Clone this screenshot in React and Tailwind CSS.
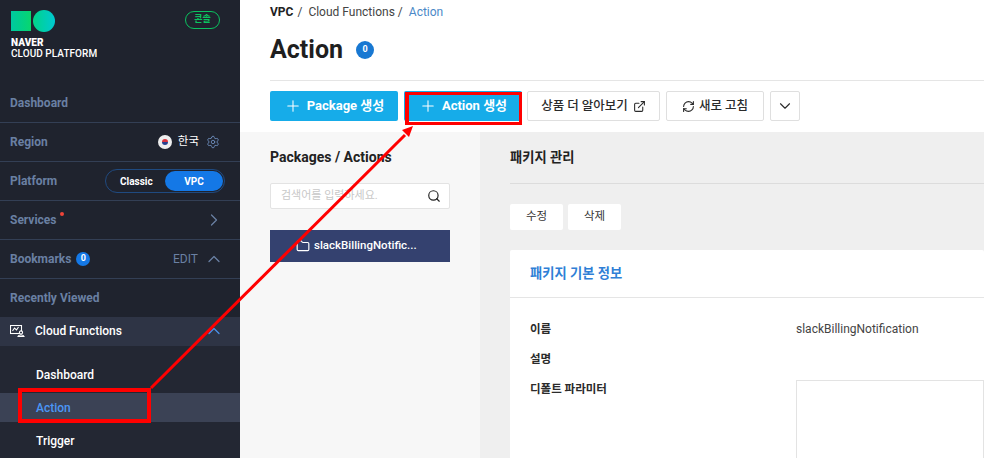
import React from "react";
import { Plus, ExternalLink, RefreshCw, ChevronDown, ChevronUp, ChevronRight, Search, Folder, Settings } from "lucide-react";

const font = { fontFamily: '"Roboto","Noto Sans CJK KR",sans-serif' };

function Row({ children }) {
  return <div className="h-[39px] shrink-0 border-b border-[#333f55] pl-[10px] pr-[20px] flex items-center justify-between text-[#6a80a3] text-[12px] font-bold">{children}</div>;
}

function Sidebar() {
  return (
    <aside className="w-[240px] h-full shrink-0 bg-[#1f232e] flex flex-col overflow-hidden">
      <div className="h-[84px] shrink-0 pl-[11px] pr-[20px] pt-[10px] flex justify-between items-start">
        <div>
          <div className="flex items-center gap-[2px]">
            <div className="w-[20px] h-[20px] bg-gradient-to-r from-[#00c9a0] to-[#0ad66d]" />
            <div className="w-[22px] h-[22px] rounded-full bg-gradient-to-r from-[#06d486] to-[#00c8d0]" />
          </div>
          <div className="mt-[5px] text-white text-[10px] leading-[11px] font-black tracking-[0.05px]">NAVER</div>
          <div className="text-white text-[10px] leading-[11px] font-medium tracking-[0.05px]">CLOUD PLATFORM</div>
        </div>
        <div className="mt-px w-[35px] h-[18px] rounded-full border border-[#0bc25f] text-[#0bc25f] text-[9px] font-bold flex items-center justify-center">콘솔</div>
      </div>
      <Row><span>Dashboard</span></Row>
      <Row>
        <span>Region</span>
        <span className="flex items-center text-white font-normal text-[11.5px]">
          <svg width="14" height="14" viewBox="0 0 14 14" className="mr-[6px]"><circle cx="7" cy="7" r="7" fill="#eee" /><path d="M4 7a3 3 0 0 1 6 0z" fill="#d8333e" /><path d="M4 7a3 3 0 0 0 6 0z" fill="#26408f" /></svg>
          한국
          <Settings size={14} className="ml-[7px] text-[#6a8ab8]" strokeWidth={1.6} />
        </span>
      </Row>
      <Row>
        <span>Platform</span>
        <span className="-mr-[5px] w-[120px] h-[24px] rounded-full border border-[#1f4a80] flex items-center justify-between text-white text-[10px] font-bold pr-px">
          <span className="pl-[14px]">Classic</span>
          <span className="w-[58px] h-[20px] rounded-full bg-[#1478e6] flex items-center justify-center">VPC</span>
        </span>
      </Row>
      <Row>
        <span className="relative">Services<span className="absolute -right-[7px] top-[1px] w-[4px] h-[4px] rounded-full bg-[#f04438]" /></span>
        <ChevronRight size={20} className="text-[#6a80a3] -mr-[4px]" strokeWidth={1.5} />
      </Row>
      <Row>
        <span className="flex items-center">Bookmarks<span className="ml-[5px] w-[14px] h-[14px] rounded-full bg-[#1478e6] text-white text-[9px] flex items-center justify-center">0</span></span>
        <span className="flex items-center font-normal text-[12px]">EDIT<ChevronUp size={20} className="ml-[6px] -mr-[4px]" strokeWidth={1.5} /></span>
      </Row>
      <div className="h-[38px] shrink-0 pl-[10px] flex items-center text-[#6a80a3] text-[12px] font-bold">Recently Viewed</div>
      <div className="h-[29px] shrink-0 bg-[#2e3445] pl-[10px] pr-[20px] pb-[2px] flex items-center justify-between text-white text-[12px] font-medium">
        <span className="flex items-center">
          <svg width="15" height="12" viewBox="0 0 15 12" fill="none" stroke="#fff" strokeWidth="1.1" className="mr-[10px]"><rect x="0.5" y="0.5" width="11" height="8" /><path d="M2.5 6l2-3 2 2 2-3" /><circle cx="11" cy="7.5" r="1.6" fill="#2e3445" /><path d="M8 11.5c.5-2 5.5-2 6 0z" fill="#2e3445" /></svg>
          Cloud Functions
        </span>
        <ChevronUp size={20} className="text-[#4a90e8] -mr-[4px]" strokeWidth={1.5} />
      </div>
      <div className="flex-1 bg-[#232733] pt-[13px] text-[12px] font-medium text-white">
        <div className="h-[34px] pl-[36px] pb-[2px] flex items-center">Dashboard</div>
        <div className="h-[29px] pl-[36px] flex items-center bg-[#3b4255] text-[#4b96f5]">Action</div>
        <div className="h-[38px] pl-[36px] flex items-center">Trigger</div>
      </div>
    </aside>
  );
}

function Toolbar() {
  const blue = "h-[30px] rounded-[2px] bg-[#16ace9] text-white text-[13px] font-bold flex items-center justify-center";
  const ghost = "h-[30px] rounded-[2px] border border-[#dfdfdf] bg-white text-[#2b2b2b] text-[12.5px] font-medium flex items-center justify-center";
  return (
    <div className="flex items-center h-[30px] mt-[10px]">
      <button className={`${blue} w-[128px]`}><Plus size={18} className="mr-[5px]" strokeWidth={1.4} />Package 생성</button>
      <button className={`${blue} w-[118px] ml-[6px]`}><Plus size={18} className="mr-[5px]" strokeWidth={1.4} />Action 생성</button>
      <button className={`${ghost} w-[133px] ml-[5px]`}>상품 더 알아보기<ExternalLink size={13} className="ml-[5px]" /></button>
      <button className={`${ghost} w-[98px] ml-[6px]`}><RefreshCw size={13} className="mr-[4px]" />새로 고침</button>
      <button className={`${ghost} w-[30px] ml-[6px]`}><ChevronDown size={18} strokeWidth={1.5} /></button>
    </div>
  );
}

function InfoRow({ label, value, className }) {
  return (
    <div className={`flex text-[11.5px] ${className}`}>
      <div className="w-[286px] pl-[20px] font-bold text-[#2b2b2b]">{label}</div>
      <div className="text-[#444] text-[12px]">{value}</div>
    </div>
  );
}

export default function App() {
  return (
    <div style={font} className="relative w-[984px] h-[458px] overflow-hidden flex bg-white">
      <Sidebar />
      <main className="flex-1 flex flex-col min-w-0">
        <header className="h-[132px] shrink-0 pl-[30px]">
          <div className="h-[24px] flex items-center text-[12px] text-[#444]">
            <span className="font-bold text-[#222]">VPC</span><span className="ml-[4px]">/</span>
            <span className="ml-[6px]">Cloud Functions</span><span className="ml-[3px]">/</span>
            <span className="ml-[6px] text-[#4a88c7]">Action</span>
          </div>
          <div className="h-[57px] border-b border-[#e5e5e5] flex items-start pt-[10px]">
            <span className="text-[25px] leading-[32px] font-bold text-[#1f1f1f]">Action</span>
            <span className="ml-[13px] mt-[7px] w-[18px] h-[18px] rounded-full bg-[#1878d2] text-white text-[9px] font-bold flex items-center justify-center">0</span>
          </div>
          <Toolbar />
        </header>
        <div className="flex-1 flex min-h-0">
          <section className="w-[240px] shrink-0 bg-[#f7f7f7] pl-[30px] pr-[30px]">
            <div className="h-[51px] flex items-center text-[14px] font-bold text-[#222]">Packages / Actions</div>
            <div className="h-[26px] border border-[#e3e3e3] bg-white rounded-[2px] flex items-center justify-between pl-[10px] pr-[8px] text-[11px] text-[#c8c8c8]">
              <span>검색어를 입력하세요.</span>
              <Search size={14} className="text-[#222]" />
            </div>
            <div className="mt-[21px] h-[32px] bg-[#34416f] pl-[26px] text-white text-[11.5px] font-medium flex items-center">
              <Folder size={14} className="mr-[4px]" />slackBillingNotific...
            </div>
          </section>
          <section className="flex-1 min-w-0 bg-[#efefef] pl-[30px]">
            <div className="h-[52px] border-b border-[#dcdcdc] flex items-center text-[13.3px] font-bold text-[#222]">패키지 관리</div>
            <div className="mt-[20px] flex gap-[5px]">
              <button className="w-[53px] h-[26px] bg-white rounded-[2px] text-[11.5px] text-[#333]">수정</button>
              <button className="w-[53px] h-[26px] bg-white rounded-[2px] text-[11.5px] text-[#333]">삭제</button>
            </div>
            <div className="mt-[20px] h-[300px] bg-white rounded-t-[2px]">
              <div className="h-[48px] border-b border-[#e5e5e5] pl-[20px] flex items-center text-[13.3px] font-bold text-[#2f7fd6]">패키지 기본 정보</div>
              <InfoRow className="mt-[23px] leading-[16px]" label="이름" value="slackBillingNotification" />
              <InfoRow className="mt-[14px] leading-[16px]" label="설명" value="" />
              <div className="flex mt-[14px] text-[11.5px] leading-[16px]">
                <div className="w-[286px] pl-[20px] font-bold text-[#2b2b2b]">디폴트 파라미터</div>
                <div className="flex-1 h-[100px] -mt-px border border-[#e3e3e3]" />
              </div>
            </div>
          </section>
        </div>
      </main>

      <div className="absolute left-[405px] top-[92px] w-[117px] h-[33px] border-[3px] border-l-4 border-[#ff0000]" />
      <div className="absolute left-[18px] top-[388px] w-[133px] h-[35px] border-4 border-[#ff0000]" />
      <svg className="absolute left-0 top-0 pointer-events-none" width="984" height="458">
        <line x1="151" y1="388" x2="405" y2="135" stroke="#ff0000" strokeWidth="3" />
        <polygon points="413,126 402,130 409,137" fill="#ff0000" />
      </svg>
    </div>
  );
}
